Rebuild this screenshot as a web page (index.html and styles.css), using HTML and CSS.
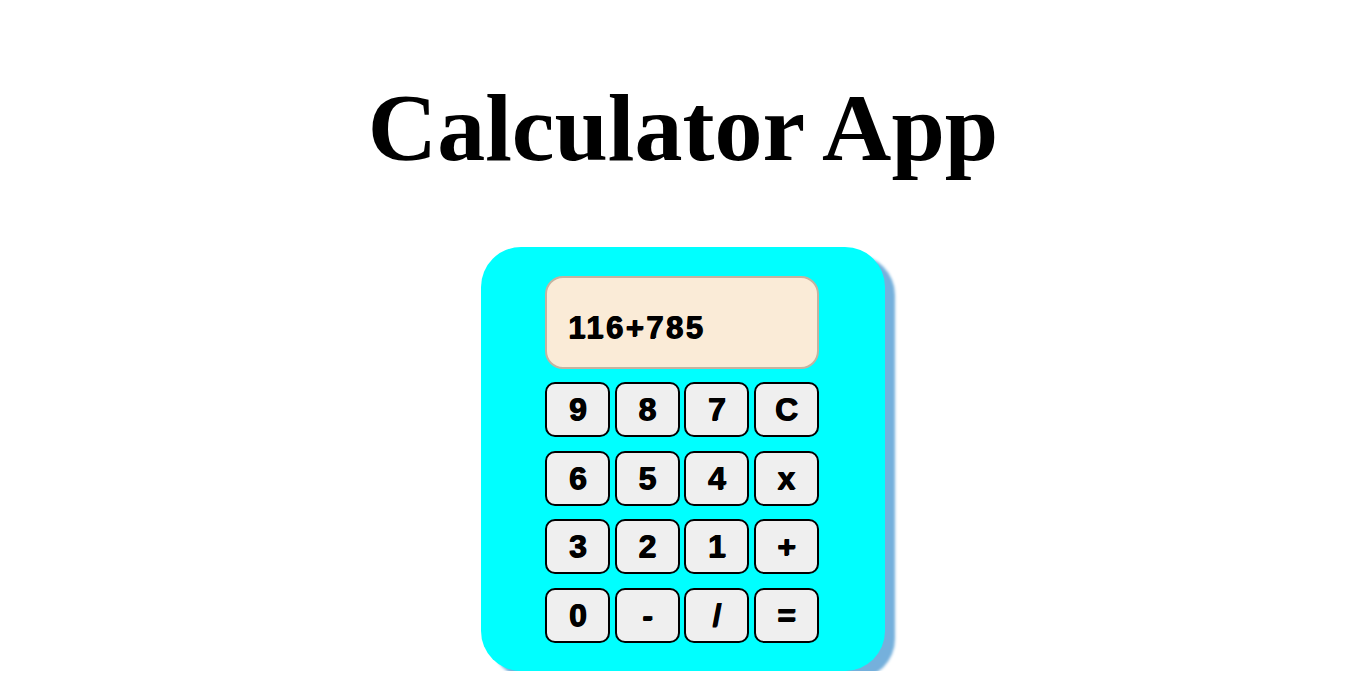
FILE: index.html
```html
<!DOCTYPE html>
<html lang="en">
<head>
<meta charset="utf-8">
<title>Calculator App</title>
<link rel="stylesheet" href="styles.css">
</head>
<body>
<h1 class="title">Calculator App</h1>
<div class="calc">
  <div class="display">116+785</div>
  <div class="keys">
    <button class="key">9</button>
    <button class="key">8</button>
    <button class="key">7</button>
    <button class="key">C</button>
    <button class="key">6</button>
    <button class="key">5</button>
    <button class="key">4</button>
    <button class="key">x</button>
    <button class="key">3</button>
    <button class="key">2</button>
    <button class="key">1</button>
    <button class="key">+</button>
    <button class="key">0</button>
    <button class="key">-</button>
    <button class="key">/</button>
    <button class="key">=</button>
  </div>
</div>
</body>
</html>
```
FILE: styles.css
```css
html, body {
  margin: 0;
  padding: 0;
  background: #ffffff;
}
body {
  display: flex;
  flex-direction: column;
  align-items: center;
}
.title {
  font-family: "Liberation Serif", "Times New Roman", serif;
  font-weight: bold;
  font-size: 96px;
  margin: 72px 0 0;
  line-height: normal;
  color: #000;
}
.calc {
  margin-top: 64px;
  width: 404px;
  height: 424px;
  box-sizing: border-box;
  background: #00ffff;
  border-radius: 40px;
  box-shadow: 10px 8px 3px #75b0dc;
  padding: 29px 2px 0 0;
  display: flex;
  flex-direction: column;
  align-items: center;
  gap: 13px;
}
.display {
  width: 274px;
  height: 93px;
  box-sizing: border-box;
  background: #faebd7;
  border: 2px solid #c5b3a0;
  border-radius: 18px;
  font-family: "Liberation Sans", Arial, sans-serif;
  font-weight: bold;
  font-size: 31px;
  letter-spacing: 2.5px;
  text-shadow: 1px 0 0 #000, 0 1px 0 #000;
  display: flex;
  align-items: center;
  padding: 10px 0 0 21px;
  color: #000;
}
.keys {
  display: grid;
  grid-template-columns: repeat(4, 65px);
  grid-auto-rows: 55px;
  column-gap: 4.5px;
  row-gap: 13.5px;
}
.key {
  margin: 0;
  padding: 0;
  background: #efefef;
  border: 2px solid #000;
  border-radius: 10px;
  font-family: "Liberation Sans", Arial, sans-serif;
  font-weight: bold;
  font-size: 32px;
  text-shadow: 1px 0 0 #000, 0 1px 0 #000;
  color: #000;
}
```
